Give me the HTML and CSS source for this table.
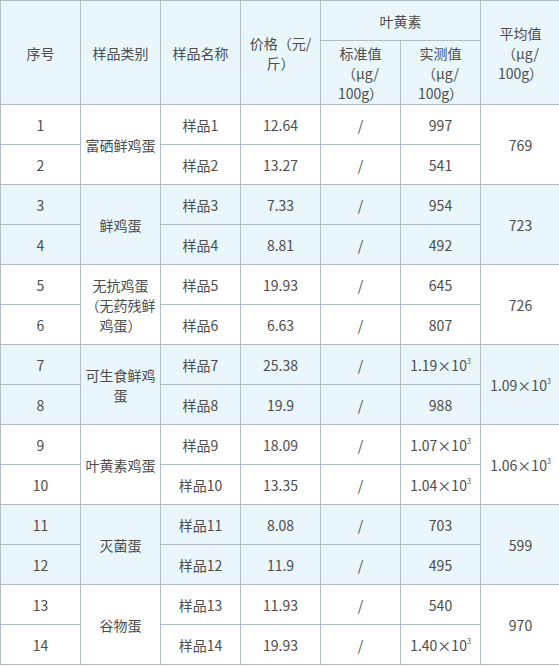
FILE: index.html
```html
<!DOCTYPE html>
<html lang="zh">
<head>
<meta charset="utf-8">
<title>鸡蛋叶黄素</title>
<link rel="stylesheet" href="styles.css">
</head>
<body>
<table class="data">
  <colgroup>
    <col class="c"><col class="c"><col class="c"><col class="c"><col class="c"><col class="c"><col class="c">
  </colgroup>
  <thead>
    <tr class="h1">
      <th rowspan="2">序号</th>
      <th rowspan="2">样品类别</th>
      <th rowspan="2">样品名称</th>
      <th rowspan="2">价格（元/斤）</th>
      <th colspan="2">叶黄素</th>
      <th rowspan="2">平均值<br>（μg/<br>100g）</th>
    </tr>
    <tr class="h2">
      <th>标准值<br>（μg/<br>100g）</th>
      <th>实测值<br>（μg/<br>100g）</th>
    </tr>
  </thead>
  <tbody>
    <tr><td>1</td><td rowspan="2">富硒鲜鸡蛋</td><td>样品1</td><td>12.64</td><td>/</td><td>997</td><td rowspan="2">769</td></tr>
    <tr><td>2</td><td>样品2</td><td>13.27</td><td>/</td><td>541</td></tr>
    <tr class="alt"><td>3</td><td rowspan="2">鲜鸡蛋</td><td>样品3</td><td>7.33</td><td>/</td><td>954</td><td rowspan="2">723</td></tr>
    <tr class="alt"><td>4</td><td>样品4</td><td>8.81</td><td>/</td><td>492</td></tr>
    <tr><td>5</td><td rowspan="2">无抗鸡蛋（无药残鲜鸡蛋）</td><td>样品5</td><td>19.93</td><td>/</td><td>645</td><td rowspan="2">726</td></tr>
    <tr><td>6</td><td>样品6</td><td>6.63</td><td>/</td><td>807</td></tr>
    <tr class="alt"><td>7</td><td rowspan="2">可生食鲜鸡蛋</td><td>样品7</td><td>25.38</td><td>/</td><td>1.19×10<sup>3</sup></td><td rowspan="2">1.09×10<sup>3</sup></td></tr>
    <tr class="alt"><td>8</td><td>样品8</td><td>19.9</td><td>/</td><td>988</td></tr>
    <tr><td>9</td><td rowspan="2">叶黄素鸡蛋</td><td>样品9</td><td>18.09</td><td>/</td><td>1.07×10<sup>3</sup></td><td rowspan="2">1.06×10<sup>3</sup></td></tr>
    <tr><td>10</td><td>样品10</td><td>13.35</td><td>/</td><td>1.04×10<sup>3</sup></td></tr>
    <tr class="alt"><td>11</td><td rowspan="2">灭菌蛋</td><td>样品11</td><td>8.08</td><td>/</td><td>703</td><td rowspan="2">599</td></tr>
    <tr class="alt"><td>12</td><td>样品12</td><td>11.9</td><td>/</td><td>495</td></tr>
    <tr><td>13</td><td rowspan="2">谷物蛋</td><td>样品13</td><td>11.93</td><td>/</td><td>540</td><td rowspan="2">970</td></tr>
    <tr><td>14</td><td>样品14</td><td>19.93</td><td>/</td><td>1.40×10<sup>3</sup></td></tr>
  </tbody>
</table>
</body>
</html>
```
FILE: styles.css
```css
html, body {
  margin: 0;
  padding: 0;
  overflow: hidden;
  background: #ffffff;
}
.data {
  border-collapse: collapse;
  table-layout: fixed;
  width: 561px;
  font-family: "Noto Sans CJK SC", "Noto Sans", sans-serif;
  font-size: 14px;
  line-height: 20px;
  color: #4d4d4d;
}
.data .c {
  width: 80px;
}
.data th,
.data td {
  border: 1px solid #b3bdc4;
  padding: 0 4px;
  text-align: center;
  vertical-align: middle;
  font-weight: normal;
}
.data thead th {
  background: #e9f6fc;
}
.data .h1 {
  height: 40px;
}
.data .h2 {
  height: 64px;
}
.data tbody tr {
  height: 40px;
}
.data tbody tr.alt td {
  background: #e9f6fc;
}
.data sup {
  font-size: 7px;
  line-height: 0;
  vertical-align: 7px;
}
```
